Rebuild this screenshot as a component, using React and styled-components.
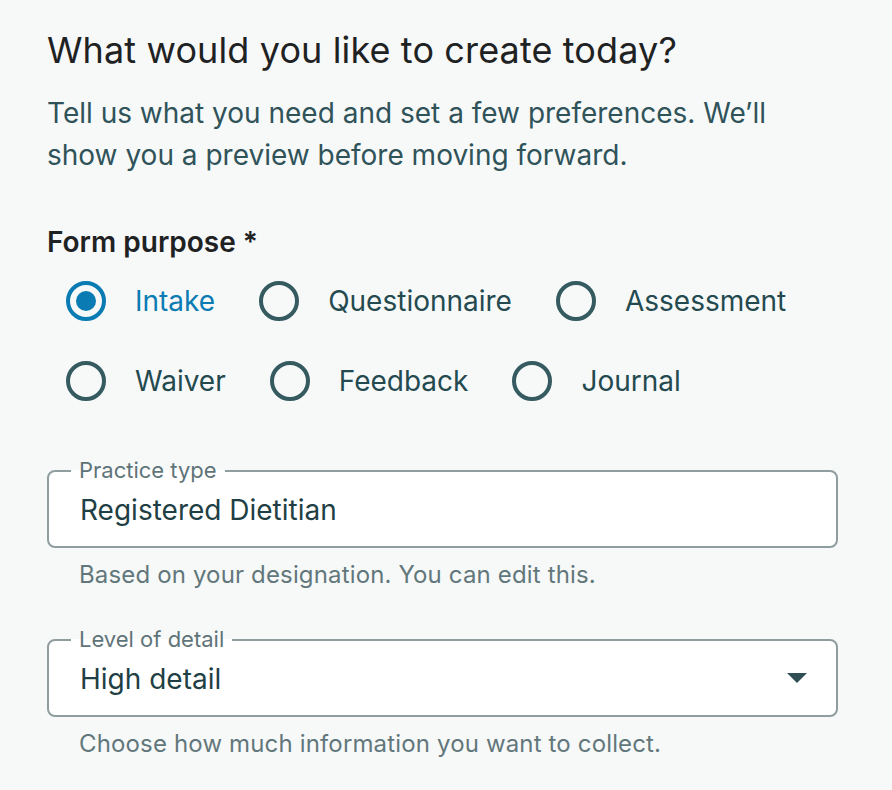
import styled, { createGlobalStyle } from "styled-components";

const GlobalStyle = createGlobalStyle`
  body {
    margin: 0;
    background: #f7f9f9;
    font-family: Inter, "Noto Sans", sans-serif;
  }
`;

const purposes = [
  ["Intake", "Questionnaire", "Assessment"],
  ["Waiver", "Feedback", "Journal"],
];

export default function App() {
  return (
    <>
      <GlobalStyle />
      <Page>
        <Heading>What would you like to create today?</Heading>
        <Intro>
          Tell us what you need and set a few preferences. We’ll show you a
          preview before moving forward.
        </Intro>

        <GroupLabel>Form purpose *</GroupLabel>
        <RadioGrid>
          {purposes.map((row, i) => (
            <RadioRow key={i}>
              {row.map((name) => (
                <RadioOption key={name} $checked={name === "Intake"}>
                  <RadioCircle $checked={name === "Intake"} />
                  {name}
                </RadioOption>
              ))}
            </RadioRow>
          ))}
        </RadioGrid>

        <Field>
          <FieldBox>
            <Legend>Practice type</Legend>
            <FieldValue>Registered Dietitian</FieldValue>
          </FieldBox>
          <Helper>Based on your designation. You can edit this.</Helper>
        </Field>

        <Field>
          <FieldBox>
            <Legend>Level of detail</Legend>
            <FieldValue>High detail</FieldValue>
            <Caret viewBox="0 0 20 10">
              <path d="M0 0 L20 0 L10 10 Z" fill="#2f4f55" />
            </Caret>
          </FieldBox>
          <Helper>Choose how much information you want to collect.</Helper>
        </Field>
      </Page>
    </>
  );
}

const Page = styled.div`
  padding: 28px 0 30px 47px;
  width: 791px;
`;

const Heading = styled.h1`
  margin: 0;
  font-size: 36px;
  line-height: 44px;
  font-weight: 400;
  letter-spacing: 0.12px;
  color: #1f2223;
`;

const Intro = styled.p`
  margin: 20px 0 0;
  font-size: 28px;
  line-height: 42px;
  color: #2f5359;
`;

const GroupLabel = styled.div`
  margin-top: 49px;
  font-size: 28px;
  line-height: 34px;
  font-weight: 600;
  color: #1f2223;
`;

const RadioGrid = styled.div`
  display: flex;
  flex-direction: column;
  gap: 40px;
  margin-top: 22px;
  margin-left: 19px;
`;

const RadioRow = styled.div`
  display: flex;
  gap: 44px;
`;

const RadioOption = styled.label`
  display: flex;
  align-items: center;
  gap: 29px;
  height: 40px;
  font-size: 28px;
  color: ${(p) => (p.$checked ? "#0a7bb3" : "#244a50")};
`;

const RadioCircle = styled.span`
  position: relative;
  box-sizing: border-box;
  width: 40px;
  height: 40px;
  border-radius: 50%;
  border: 4px solid ${(p) => (p.$checked ? "#0a7bb3" : "#355a60")};

  &::after {
    content: "";
    display: ${(p) => (p.$checked ? "block" : "none")};
    position: absolute;
    left: 6px;
    top: 6px;
    width: 20px;
    height: 20px;
    border-radius: 50%;
    background: #0a7bb3;
  }
`;

const Field = styled.div`
  margin-top: 69px;

  & + & {
    margin-top: 49px;
  }
`;

const FieldBox = styled.div`
  position: relative;
  box-sizing: border-box;
  height: 78px;
  display: flex;
  align-items: center;
  padding: 0 29px 0 31px;
  border: 2px solid #909d9f;
  border-radius: 8px;
  background: #fff;
`;

const Legend = styled.span`
  position: absolute;
  left: 22px;
  top: -14px;
  padding: 0 8px;
  font-size: 22px;
  line-height: 24px;
  color: #5f7478;
  background: linear-gradient(#f7f9f9 50%, #fff 50%);
`;

const FieldValue = styled.span`
  flex: 1;
  font-size: 28px;
  color: #1f3f45;
  padding-top: 2px;
`;

const Caret = styled.svg`
  width: 20px;
  height: 10px;
`;

const Helper = styled.div`
  margin: 12px 0 0 32px;
  font-size: 24px;
  line-height: 30px;
  letter-spacing: 0.15px;
  color: #62777b;
`;
